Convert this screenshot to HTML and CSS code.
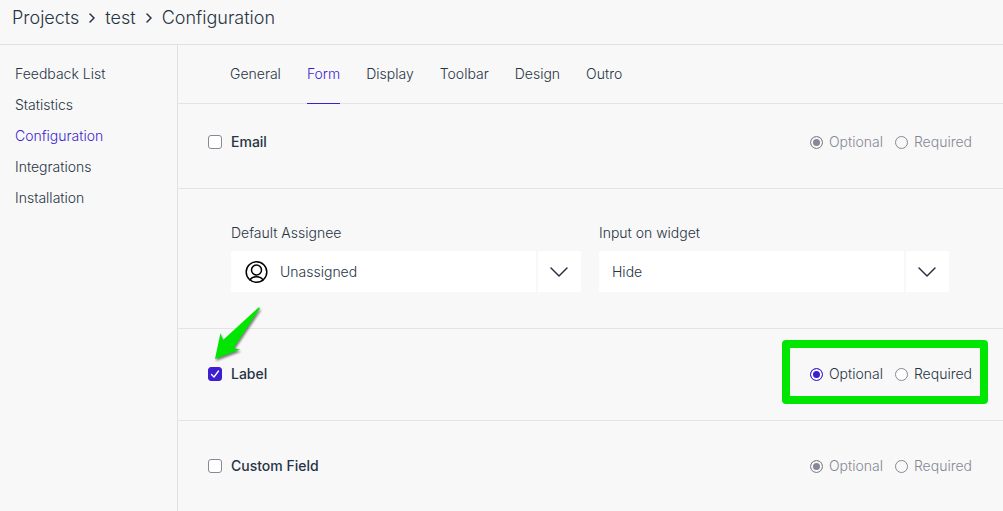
FILE: index.html
```html
<!DOCTYPE html>
<html lang="en">
<head>
  <meta charset="UTF-8">
  <meta name="viewport" content="width=device-width, initial-scale=1">
  <title>Configuration</title>
  <link rel="stylesheet" href="styles.css">
</head>
<body>

  <!-- Breadcrumb -->
  <header class="breadcrumb">
    <a href="#">Projects</a>
    <svg class="crumb-arrow" viewBox="0 0 6 10"><path d="M1 1l4 4-4 4"/></svg>
    <a href="#">test</a>
    <svg class="crumb-arrow" viewBox="0 0 6 10"><path d="M1 1l4 4-4 4"/></svg>
    <span>Configuration</span>
  </header>

  <div class="page">

    <nav class="sidebar">
      <a href="#">Feedback List</a>
      <a href="#">Statistics</a>
      <a href="#" class="active">Configuration</a>
      <a href="#">Integrations</a>
      <a href="#">Installation</a>
    </nav>

    <main class="content">

      <nav class="tabs">
        <a href="#">General</a>
        <a href="#" class="active">Form</a>
        <a href="#">Display</a>
        <a href="#">Toolbar</a>
        <a href="#">Design</a>
        <a href="#">Outro</a>
      </nav>

      <!-- Email -->
      <section class="row row-email">
        <label class="toggle">
          <span class="check"><input type="checkbox"></span>
          Email
        </label>
        <div class="options">
          <label><input type="radio" name="email" checked disabled>Optional</label>
          <label><input type="radio" name="email" disabled>Required</label>
        </div>
      </section>

      <!-- Assignee and widget input -->
      <section class="fields">
        <div class="field">
          <label for="assignee">Default Assignee</label>
          <div class="select with-icon">
            <select id="assignee">
              <option>Unassigned</option>
            </select>
            <svg class="user-icon" viewBox="0 0 24 24">
              <circle cx="11.500" cy="12" r="10.300"/>
              <circle cx="11.500" cy="10" r="5"/>
              <path d="M5 20c1.300-2.300 3.700-3.200 6.500-3.200s5.200.9 6.500 3.200"/>
            </svg>
            <span class="divider"></span>
            <svg class="chevron" viewBox="0 0 18 10"><path d="M1 1l8 8 8-8"/></svg>
          </div>
        </div>
        <div class="field">
          <label for="widget">Input on widget</label>
          <div class="select">
            <select id="widget">
              <option>Hide</option>
            </select>
            <span class="divider"></span>
            <svg class="chevron" viewBox="0 0 18 10"><path d="M1 1l8 8 8-8"/></svg>
          </div>
        </div>
      </section>

      <!-- Label -->
      <section class="row">
        <label class="toggle">
          <span class="check">
            <input type="checkbox" checked>
            <svg class="tick" viewBox="0 0 14 14"><path d="M3.500 7.500l2.500 2.500 4.500-6"/></svg>
          </span>
          Label
          <svg class="pointer" viewBox="0 0 50 58">
            <path d="M44.500 2.500Q46.500 2 45.500 4L19.500 43 26 44.500 1 54 6.500 28 9 35Z"/>
          </svg>
        </label>
        <div class="options highlight">
          <label><input type="radio" name="label" checked>Optional</label>
          <label><input type="radio" name="label">Required</label>
        </div>
      </section>

      <!-- Custom field -->
      <section class="row">
        <label class="toggle">
          <span class="check"><input type="checkbox"></span>
          Custom Field
        </label>
        <div class="options">
          <label><input type="radio" name="custom" checked disabled>Optional</label>
          <label><input type="radio" name="custom" disabled>Required</label>
        </div>
      </section>

    </main>
  </div>

</body>
</html>
```

FILE: styles.css
```css
* {
  box-sizing: border-box;
}
body {
  margin: 0;
  min-height: 100vh;
  display: flex;
  flex-direction: column;
  overflow-x: hidden;
  background: #f8f8f8;
  color: #273444;
  font-family: Inter, "Liberation Sans", sans-serif;
  font-size: 14px;
  font-weight: 300;
  line-height: 20px;
}
a {
  color: inherit;
  text-decoration: none;
}
svg {
  fill: none;
  stroke-linecap: round;
  stroke-linejoin: round;
}

/* Breadcrumb */
.breadcrumb {
  display: flex;
  align-items: center;
  gap: 10px;
  padding: 6px 12px 14px;
  border-bottom: 1px solid #e0e1e4;
  font-size: 18px;
  line-height: 24px;
}
.crumb-arrow {
  width: 6px;
  height: 10px;
  stroke: #273444;
  stroke-width: 1.5;
}

.page {
  flex: 1;
  display: flex;
}

/* Sidebar */
.sidebar {
  width: 178px;
  flex-shrink: 0;
  padding: 13px 15px;
  border-right: 1px solid #e0e1e4;
}
.sidebar a {
  display: block;
  line-height: 31px;
}
.sidebar .active,
.tabs .active {
  color: #3d1fd1;
}

.content {
  flex: 1;
}

/* Tabs */
.tabs {
  display: flex;
  gap: 26px;
  padding-left: 52px;
  border-bottom: 1px solid #e4e4e4;
}
.tabs a {
  padding: 19px 0;
  margin-bottom: -1px;
  border-bottom: 1px solid transparent;
}
.tabs .active {
  border-bottom-color: #3d1fd1;
}

/* Setting rows */
.row {
  display: flex;
  justify-content: space-between;
  align-items: flex-start;
  padding: 35px 31px 36px 30px;
  border-bottom: 1px solid #e4e4e4;
}
.row:last-child {
  border-bottom: none;
  padding-bottom: 24px;
}
.row-email {
  padding-top: 28px;
}
.toggle {
  position: relative;
  display: flex;
  align-items: center;
  gap: 9px;
  font-weight: 500;
}
.check {
  position: relative;
  display: flex;
}
.check input {
  appearance: none;
  width: 14px;
  height: 14px;
  margin: 0;
  background: white;
  border: 1px solid #858993;
  border-radius: 3px;
}
.check input:checked {
  background: #3d1fd1;
  border-color: #3d1fd1;
}
.tick {
  position: absolute;
  inset: 0;
  stroke: white;
  stroke-width: 1.3;
  pointer-events: none;
}
.options {
  position: relative;
  display: flex;
  gap: 12px;
}
.options label {
  display: flex;
  align-items: center;
  gap: 6px;
}
.options input {
  appearance: none;
  width: 13px;
  height: 13px;
  margin: 0;
  background: white;
  border: 1px solid #858993;
  border-radius: 50%;
}
.options input:checked {
  background: #3d1fd1;
  border-color: #3d1fd1;
  box-shadow: inset 0 0 0 2px white;
}
.options input:disabled {
  background: #f8f8f8;
}
.options input:disabled:checked {
  background: #858993;
  border-color: #858993;
  box-shadow: inset 0 0 0 2px #f8f8f8;
}
.options label:has(input:disabled) {
  color: #858993;
}

/* Green callouts */
.highlight::before {
  content: "";
  position: absolute;
  inset: -24px -16px -20px -28px;
  border: 8px solid #00e600;
  border-radius: 4px;
  pointer-events: none;
}
.pointer {
  position: absolute;
  left: 6px;
  bottom: 21px;
  width: 50px;
  height: 58px;
  fill: #00e600;
  filter: drop-shadow(1px 2px 1px rgba(0, 0, 0, 0.5));
  pointer-events: none;
}

/* Select fields */
.fields {
  display: grid;
  grid-template-columns: 1fr 1fr;
  gap: 18px;
  padding: 34px 54px 36px 53px;
  border-bottom: 1px solid #e4e4e4;
}
.field > label {
  display: block;
  margin-bottom: 8px;
}
.select {
  position: relative;
}
.select select {
  appearance: none;
  display: block;
  width: 100%;
  height: 41px;
  padding: 0 56px 0 13px;
  background: white;
  border: none;
  border-radius: 2px;
  color: inherit;
  font: inherit;
}
.with-icon select {
  padding-left: 49px;
}
.user-icon {
  position: absolute;
  left: 14px;
  top: 9px;
  width: 24px;
  height: 24px;
  stroke: #000;
  stroke-width: 1.5;
  pointer-events: none;
}
.divider {
  position: absolute;
  right: 43px;
  top: 0;
  bottom: 0;
  width: 2px;
  background: #f8f8f8;
}
.chevron {
  position: absolute;
  right: 13px;
  top: 16px;
  width: 18px;
  height: 10px;
  stroke: #273444;
  stroke-width: 1.5;
  pointer-events: none;
}
```
